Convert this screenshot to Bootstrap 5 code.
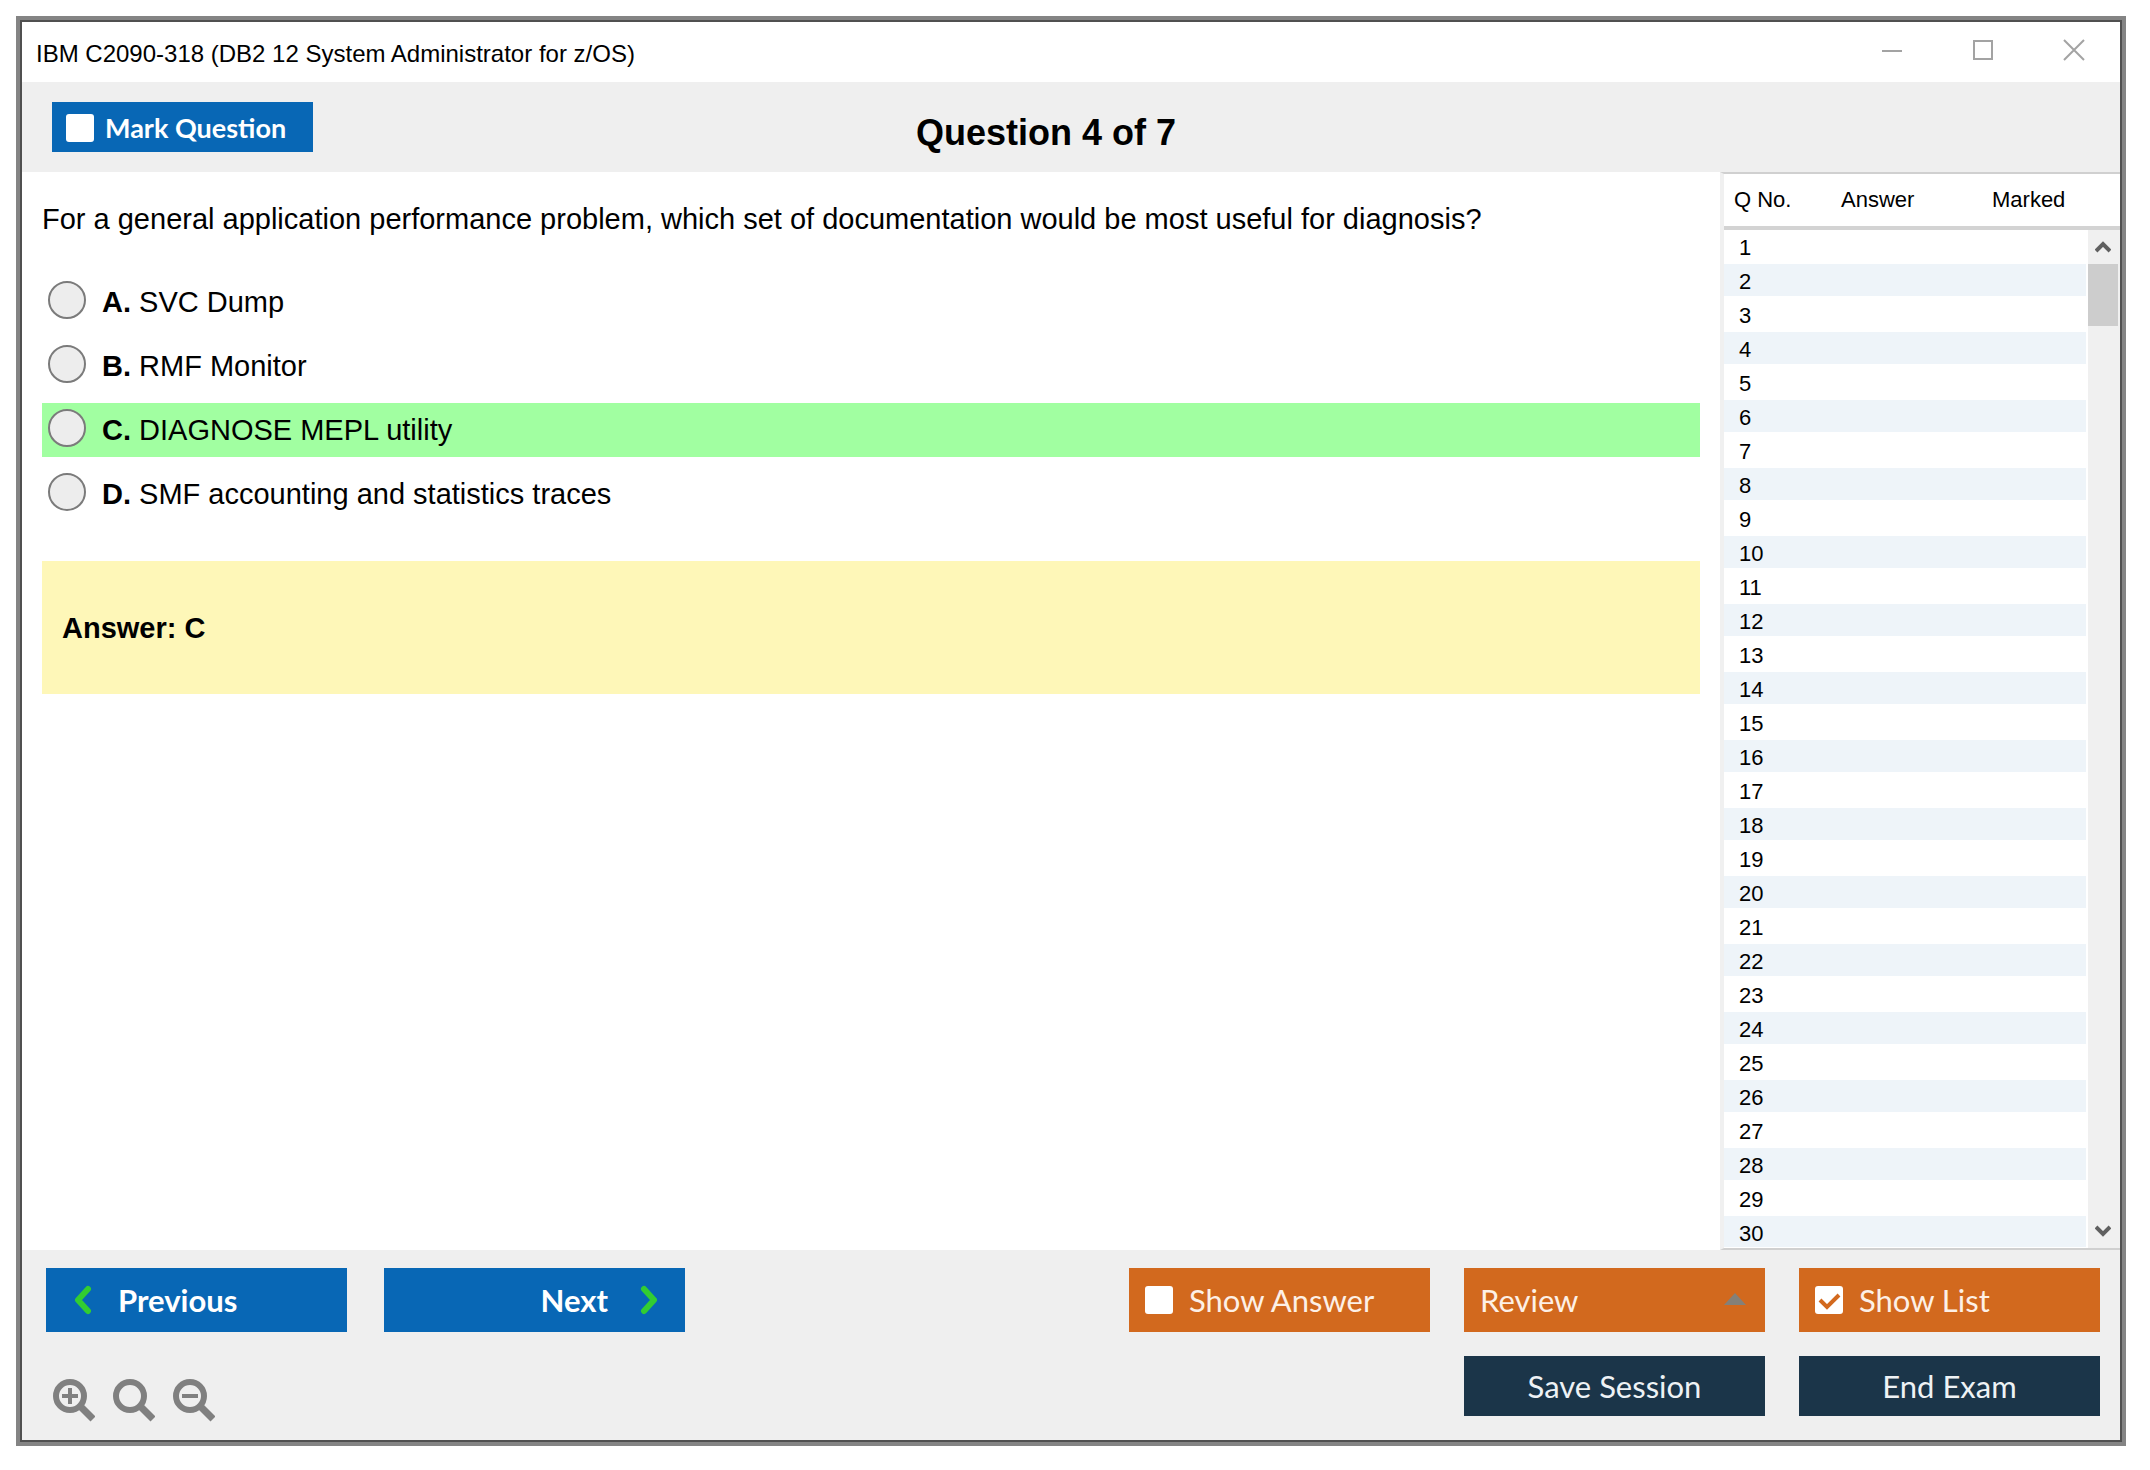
<!DOCTYPE html>
<html lang="en">
<head>
<meta charset="utf-8">
<meta name="viewport" content="width=device-width, initial-scale=1">
<title>IBM C2090-318 (DB2 12 System Administrator for z/OS)</title>
<link href="https://cdn.jsdelivr.net/npm/bootstrap@5.3.0/dist/css/bootstrap.min.css" rel="stylesheet">
<style>
  body { background: #fff; color: #000; font-family: "Liberation Sans", Arial, sans-serif; }
  .exam-page { padding: 16px 24px 24px 16px; }
  .exam-window { border: 4px solid #848484; outline: 2px solid #505050; outline-offset: -6px; padding: 2px; }
  .title-bar { height: 60px; padding: 0 35px 0 14px; font-size: 24px; line-height: 28px; }
  .title-bar .caption-text { padding-top: 4px; }
  .win-btn { padding: 0; border: 0; background: none; line-height: 0; margin-bottom: 4px; }
  .win-controls { gap: 69px; }
  .tone { background: #efefef; }
  .question-head { display: grid; grid-template-columns: 1fr auto 1fr; align-items: center; height: 90px; padding: 0 80px 0 30px; }
  .question-head h1 { font-size: 36px; line-height: 44px; font-weight: 700; margin: 12px 0 0; }
  .ui-btn { font-family: Lato, sans-serif; font-size: 31px; line-height: 36px; border: 0; border-radius: 0; color: #fff; display: flex; align-items: center; width: 301px; height: 64px; padding: 0 16px; margin: 0; }
  .ui-btn:hover, .ui-btn:focus { color: #fff; }
  .ui-blue, .ui-blue:hover { background: #0867b5; font-weight: 700; }
  .ui-orange, .ui-orange:hover { background: #d2691e; color: #fdf0e6; }
  .ui-navy, .ui-navy:hover { background: #1b3549; color: #eef2f5; height: 60px; justify-content: center; }
  .ui-mark { width: 261px; height: 50px; padding: 2px 14px 0; gap: 11px; font-size: 27px; }
  .tick-box { appearance: none; flex: none; width: 28px; height: 28px; margin: 0; background: #fff; border-radius: 3px; }
  .tick-box:checked { background: #fff url("data:image/svg+xml,%3Csvg xmlns='http://www.w3.org/2000/svg' viewBox='0 0 28 28'%3E%3Cpath d='M5 14l7 7L24 9' fill='none' stroke='%23d2691e' stroke-width='4'/%3E%3C/svg%3E"); }
  .question-pane { padding: 29px 20px; font-size: 29px; line-height: 36px; }
  .question-text { margin: 0 0 38px; }
  .choice { height: 54px; margin-bottom: 10px; padding-left: 6px; display: flex; align-items: center; gap: 16px; }
  .choice.is-correct { background: #a1ffa1; }
  .choice input { appearance: none; flex: none; width: 38px; height: 38px; margin: 0 0 4px; border: 2px solid #7b7b7b; border-radius: 50%; background: #ededed; }
  .answer-box { background: #fef7b8; height: 133px; padding: 0 20px; margin-top: 40px; display: flex; align-items: center; font-weight: 700; }
  .list-pane { flex: 0 0 400px; position: relative; border-left: 4px solid #f0f0f0; border-top: 2px solid #d0d0d0; border-bottom: 2px solid #d0d0d0; }
  .q-table { width: 100%; table-layout: fixed; border-collapse: separate; border-spacing: 0; font-size: 22px; line-height: 27px; }
  .q-table th { font-weight: 400; height: 56px; padding: 0 0 2px 10px; border-bottom: 4px solid #d3d3d3; }
  .q-table td { height: 34px; padding: 4px 0 0 15px; border-bottom: 2px solid #fff; vertical-align: top; }
  .q-table tbody tr:nth-child(even) td { background: #eef4f9; }
  .q-table tbody tr:last-child td { height: 31px; border-bottom: 0; }
  .q-table .col-no { width: 107px; }
  .q-table .col-answer { width: 151px; }
  .scroll-track { position: absolute; top: 56px; right: 0; bottom: 0; width: 34px; background: #f0f0f0; border-left: 2px solid #fff; padding-right: 2px; }
  .scroll-track button { border: 0; background: none; padding: 0; height: 34px; line-height: 0; }
  .scroll-thumb { height: 62px; background: #cdcdcd; }
  .foot { padding: 18px 20px 18px 24px; }
  .foot-row { display: flex; justify-content: space-between; align-items: flex-start; }
  .foot-row + .foot-row { margin-top: 24px; }
  .gap-left { gap: 37px; }
  .gap-right { gap: 34px; }
  .review-wrap { position: relative; }
  .review-wrap select { appearance: none; }
  .review-wrap svg { position: absolute; right: 19px; top: 24px; pointer-events: none; }
  .zoom-tools { gap: 18px; padding: 22px 0 0 7px; }
  .zoom-tools button { border: 0; background: none; padding: 0; line-height: 0; }
</style>
</head>
<body>
<div class="exam-page d-flex min-vh-100">
<main class="exam-window d-flex flex-column flex-fill">
  <header class="title-bar d-flex align-items-center justify-content-between">
    <span class="caption-text">IBM C2090-318 (DB2 12 System Administrator for z/OS)</span>
    <div class="win-controls d-flex align-items-center">
      <button class="win-btn" aria-label="Minimize"><svg width="22" height="22" stroke="#a3a3a3" stroke-width="2"><path d="M1 12h20"/></svg></button>
      <button class="win-btn" aria-label="Maximize"><svg width="22" height="22" fill="none" stroke="#a3a3a3" stroke-width="2"><path d="M2 2h18v18H2z"/></svg></button>
      <button class="win-btn" aria-label="Close"><svg width="22" height="22" stroke="#a3a3a3" stroke-width="2"><path d="M1 1l20 20M21 1L1 21"/></svg></button>
    </div>
  </header>

  <section class="question-head tone">
    <label class="btn ui-btn ui-blue ui-mark"><input type="checkbox" class="tick-box">Mark Question</label>
    <h1>Question 4 of 7</h1>
  </section>

  <div class="d-flex flex-fill">
    <form class="question-pane flex-fill">
      <p class="question-text">For a general application performance problem, which set of documentation would be most useful for diagnosis?</p>
      <label class="choice"><input type="radio" name="choice"><span><b>A.</b> SVC Dump</span></label>
      <label class="choice"><input type="radio" name="choice"><span><b>B.</b> RMF Monitor</span></label>
      <label class="choice is-correct"><input type="radio" name="choice"><span><b>C.</b> DIAGNOSE MEPL utility</span></label>
      <label class="choice"><input type="radio" name="choice"><span><b>D.</b> SMF accounting and statistics traces</span></label>
      <div class="answer-box">Answer: C</div>
    </form>

    <aside class="list-pane">
      <table class="q-table">
        <thead><tr><th class="col-no">Q No.</th><th class="col-answer">Answer</th><th>Marked</th></tr></thead>
        <tbody id="question-rows"></tbody>
      </table>
      <div class="scroll-track d-flex flex-column">
        <button aria-label="Scroll up"><svg width="16" height="14" fill="none" stroke="#606060" stroke-width="4"><path d="M1 11l7-7 7 7"/></svg></button>
        <div class="scroll-thumb"></div>
        <button class="mt-auto" aria-label="Scroll down"><svg width="16" height="14" fill="none" stroke="#606060" stroke-width="4"><path d="M1 3l7 7 7-7"/></svg></button>
      </div>
    </aside>
  </div>

  <footer class="foot tone">
    <div class="foot-row">
      <div class="d-flex gap-left">
        <button class="btn ui-btn ui-blue ps-4"><svg class="ms-1 me-4" width="20" height="30" fill="none" stroke="#32cd32" stroke-width="6" stroke-linecap="round" stroke-linejoin="round"><path d="M14 4L4 15l10 11"/></svg>Previous</button>
        <button class="btn ui-btn ui-blue justify-content-end pe-4">Next<svg class="ms-4 me-1" width="25" height="30" fill="none" stroke="#32cd32" stroke-width="6" stroke-linecap="round" stroke-linejoin="round"><path d="M12 4l10 11-10 11"/></svg></button>
      </div>
      <div class="d-flex gap-right">
        <label class="btn ui-btn ui-orange gap-3"><input type="checkbox" class="tick-box">Show Answer</label>
        <div class="review-wrap">
          <select class="ui-btn ui-orange" aria-label="Review"><option>Review</option></select>
          <svg width="22" height="14" fill="#848078"><path d="M0 13L11 1l11 12z"/></svg>
        </div>
        <label class="btn ui-btn ui-orange gap-3"><input type="checkbox" class="tick-box" checked>Show List</label>
      </div>
    </div>
    <div class="foot-row">
      <div class="zoom-tools d-flex">
        <button aria-label="Zoom in"><svg width="42" height="44" fill="none" stroke="#808080"><circle cx="17" cy="18" r="14" stroke-width="6"/><path d="M28 29l12 12" stroke-width="7"/><path d="M9 18h16M17 10v16" stroke-width="4"/></svg></button>
        <button aria-label="Reset zoom"><svg width="42" height="44" fill="none" stroke="#808080"><circle cx="17" cy="18" r="14" stroke-width="6"/><path d="M28 29l12 12" stroke-width="7"/></svg></button>
        <button aria-label="Zoom out"><svg width="42" height="44" fill="none" stroke="#808080"><circle cx="17" cy="18" r="14" stroke-width="6"/><path d="M28 29l12 12" stroke-width="7"/><path d="M9 18h16" stroke-width="4"/></svg></button>
      </div>
      <div class="d-flex gap-right">
        <button class="btn ui-btn ui-navy">Save Session</button>
        <button class="btn ui-btn ui-navy">End Exam</button>
      </div>
    </div>
  </footer>
</main>
</div>
<script src="https://cdn.jsdelivr.net/npm/bootstrap@5.3.0/dist/js/bootstrap.bundle.min.js"></script>
<script>
  const rows = document.getElementById('question-rows');
  for (let n = 1; n <= 30; n++) {
    const row = rows.insertRow();
    row.insertCell().textContent = n;
    row.insertCell();
    row.insertCell();
  }
</script>
</body>
</html>
